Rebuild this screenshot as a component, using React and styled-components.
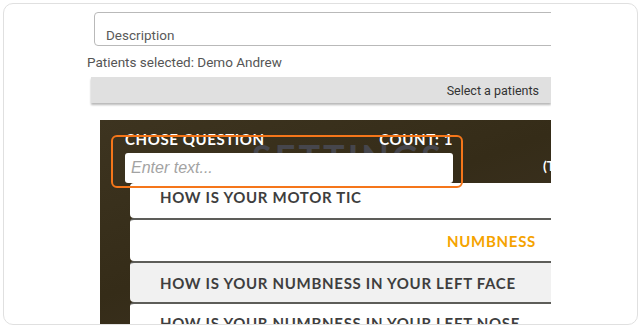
import React from "react";
import styled, { createGlobalStyle } from "styled-components";

const Global = createGlobalStyle`
  html, body { margin: 0; padding: 0; background: #ffffff; }
  body { font-family: Roboto, "Liberation Sans", sans-serif; }
`;

const Card = styled.div`
  box-sizing: border-box;
  margin: 3px 0 0 3px;
  width: 635px;
  height: 322px;
  border: 1px solid #e0e0e0;
  border-radius: 10px;
  overflow: hidden;
  padding: 8px 0 0 83px;
`;

const Content = styled.div`
  width: 464px;
  height: 100%;
  overflow: hidden;
  display: flex;
  flex-direction: column;
`;

const DescField = styled.div`
  box-sizing: border-box;
  margin-left: 7px;
  width: 520px;
  flex: none;
  height: 34px;
  border: 1px solid #b9b9b9;
  border-radius: 4px;
  padding: 14px 0 0 11px;
  font-size: 13.5px;
  color: #5a5a5a;
  line-height: 16px;
`;

const Selected = styled.div`
  margin-top: 8px;
  font-size: 13.5px;
  color: #555;
  line-height: 16px;
`;

const SelectButton = styled.div`
  box-sizing: border-box;
  margin: 7px 0 0 4px;
  width: 460px;
  flex: none;
  height: 26px;
  background: #e0e0e0;
  box-shadow: 0 2px 2px rgba(0, 0, 0, 0.28);
  display: flex;
  align-items: center;
  justify-content: flex-end;
  padding-right: 12px;
  font-size: 12.5px;
  color: #333;
`;

const Panel = styled.div`
  position: relative;
  margin: 17px 0 0 13px;
  width: 470px;
  flex: 1;
  background: linear-gradient(160deg, #3d3420 0%, #352c18 45%, #3b3120 70%, #31291a 100%);
  font-family: Lato, "DejaVu Sans", sans-serif;
  font-weight: 700;
  text-transform: uppercase;
`;

const Watermark = styled.div`
  position: absolute;
  left: 152px;
  top: 17px;
  font-size: 36px;
  line-height: 40px;
  letter-spacing: 3px;
  color: #46464c;
  font-weight: 700;
`;

const Header = styled.div`
  position: relative;
  display: flex;
  align-items: flex-end;
  padding: 12px 0 0 25px;
  height: 63px;
  box-sizing: border-box;
`;

const Chooser = styled.div`
  width: 328px;
  flex: none;
  display: flex;
  flex-direction: column;
`;

const ChooserTop = styled.div`
  display: flex;
  justify-content: space-between;
  color: #fff;
  font-size: 15px;
  letter-spacing: 0.6px;
  line-height: 14px;
  padding-right: 0;
  margin-bottom: 7px;
`;

const TextInput = styled.div`
  height: 30px;
  background: #fff;
  border-radius: 3px;
  display: flex;
  align-items: center;
  padding-left: 6px;
  font-family: "Liberation Sans", Arial, sans-serif;
  font-weight: 400;
  font-style: italic;
  text-transform: none;
  font-size: 16px;
  color: #a3a3a3;
`;

const Total = styled.div`
  flex: none;
  margin: 0 0 9px 90px;
  color: #fff;
  font-size: 14px;
  white-space: nowrap;
`;

const Highlight = styled.div`
  position: absolute;
  left: 11px;
  top: 15px;
  width: 352px;
  height: 53px;
  box-sizing: border-box;
  border: 2px solid #f5761a;
  border-radius: 6px;
`;

const List = styled.div`
  margin-left: 30px;
  display: flex;
  flex-direction: column;
`;

const Item = styled.div`
  box-sizing: border-box;
  height: ${(p) => p.$h}px;
  background: ${(p) => (p.$alt ? "#f1f1f1" : "#ffffff")};
  border-top: ${(p) => (p.$first ? "none" : "2px solid #5d5d59")};
  border-radius: 4px 0 0 4px;
  display: flex;
  align-items: ${(p) => (p.$first ? "flex-start" : "center")};
  justify-content: ${(p) => (p.$cat ? "flex-end" : "flex-start")};
  padding: ${(p) => (p.$first ? "5px 0 0 30px" : p.$cat ? "0 34px 0 0" : "0 0 0 30px")};
  font-size: 15px;
  letter-spacing: 0.7px;
  color: ${(p) => (p.$cat ? "#f5a300" : "#3e3e3e")};
  white-space: nowrap;
`;

export default function App() {
  return (
    <>
      <Global />
      <Card>
        <Content>
          <DescField>Description</DescField>
          <Selected>Patients selected: Demo Andrew</Selected>
          <SelectButton>Select a patients</SelectButton>
          <Panel>
            <Watermark>Settings</Watermark>
            <Header>
              <Chooser>
                <ChooserTop>
                  <span>Chose Question</span>
                  <span>Count: 1</span>
                </ChooserTop>
                <TextInput>Enter text...</TextInput>
              </Chooser>
              <Total>(Total</Total>
            </Header>
            <Highlight />
            <List>
              <Item $first $h={35}>How is your motor tic</Item>
              <Item $cat $h={43}>Numbness</Item>
              <Item $alt $h={41}>How is your numbness in your left face</Item>
              <Item $h={40}>How is your numbness in your left nose</Item>
            </List>
          </Panel>
        </Content>
      </Card>
    </>
  );
}
